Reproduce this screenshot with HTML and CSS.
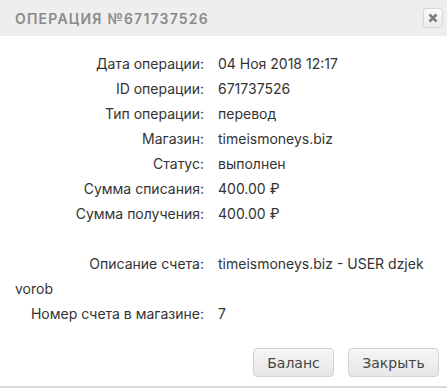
FILE: index.html
```html
<!DOCTYPE html>
<html lang="ru">
<head>
    <meta charset="UTF-8">
    <title>Операция №671737526</title>
    <link rel="stylesheet" href="styles.css">
</head>
<body>

    <div class="dialog">
        <div class="dialog-header">
            <span class="dialog-title">Операция №671737526</span>
            <button class="close-btn" title="Закрыть">
                <svg width="10" height="10" viewBox="0 0 10 10">
                    <path d="M1.5 1.5 L8.5 8.5 M8.5 1.5 L1.5 8.5" stroke="#7d7d7d" stroke-width="2.6" stroke-linecap="butt"/>
                </svg>
            </button>
        </div>

        <div class="dialog-body">
            <div class="row"><span class="label">Дата операции:</span>04 Ноя 2018 12:17</div>
            <div class="row"><span class="label">ID операции:</span>671737526</div>
            <div class="row"><span class="label">Тип операции:</span>перевод</div>
            <div class="row"><span class="label">Магазин:</span>timeismoneys.biz</div>
            <div class="row"><span class="label">Статус:</span>выполнен</div>
            <div class="row"><span class="label">Сумма списания:</span>400.00 &#8381;</div>
            <div class="row"><span class="label">Сумма получения:</span>400.00 &#8381;</div>
            <div class="row empty"></div>
            <div class="row"><span class="label">Описание счета:</span>timeismoneys.biz - USER dzjek vorob</div>
            <div class="row"><span class="label">Номер счета в магазине:</span>7</div>
        </div>

        <div class="dialog-buttons">
            <button class="btn">Баланс</button>
            <button class="btn">Закрыть</button>
        </div>
    </div>

</body>
</html>
```

FILE: styles.css
```css
* {
    margin: 0;
    padding: 0;
    box-sizing: border-box;
}

body {
    background-color: #fff;
    font-family: 'Inter', sans-serif;
    color: #333;
}

.dialog {
    width: 447px;
    height: 388px;
    border-bottom: 2px solid #d9d9d9;
    display: flex;
    flex-direction: column;
}

.dialog-header {
    height: 36px;
    background-color: #eeeeee;
    display: flex;
    align-items: center;
    justify-content: space-between;
    padding: 0 4px 0 15px;
}

.dialog-title {
    font-size: 14px;
    font-weight: 600;
    letter-spacing: 1.2px;
    text-transform: uppercase;
    color: #8a8a8a;
}

.close-btn {
    width: 20px;
    height: 20px;
    border: 1px solid #d6d6d6;
    border-radius: 3px;
    background: linear-gradient(#fafafa, #ececec);
    display: flex;
    align-items: center;
    justify-content: center;
    cursor: pointer;
}

.dialog-body {
    padding: 15px 15px 0 15px;
    font-size: 14px;
    line-height: 25px;
    color: #333;
}

.row.empty {
    height: 25px;
}

.label {
    display: inline-block;
    width: 203px;
    padding-right: 14px;
    text-align: right;
    color: #333;
}

.dialog-buttons {
    margin-top: auto;
    display: flex;
    justify-content: flex-end;
    gap: 14px;
    padding: 0 8px 9px 0;
}

.btn {
    height: 29px;
    padding: 0 10px;
    font-family: 'DejaVu Sans', Verdana, sans-serif;
    font-size: 14px;
    color: #444;
    border: 1px solid #d3d3d3;
    border-radius: 4px;
    background: linear-gradient(#f6f6f6, #e6e6e6);
    cursor: pointer;
}

.btn:first-child {
    width: 81px;
}

.btn:last-child {
    width: 91px;
}
```
